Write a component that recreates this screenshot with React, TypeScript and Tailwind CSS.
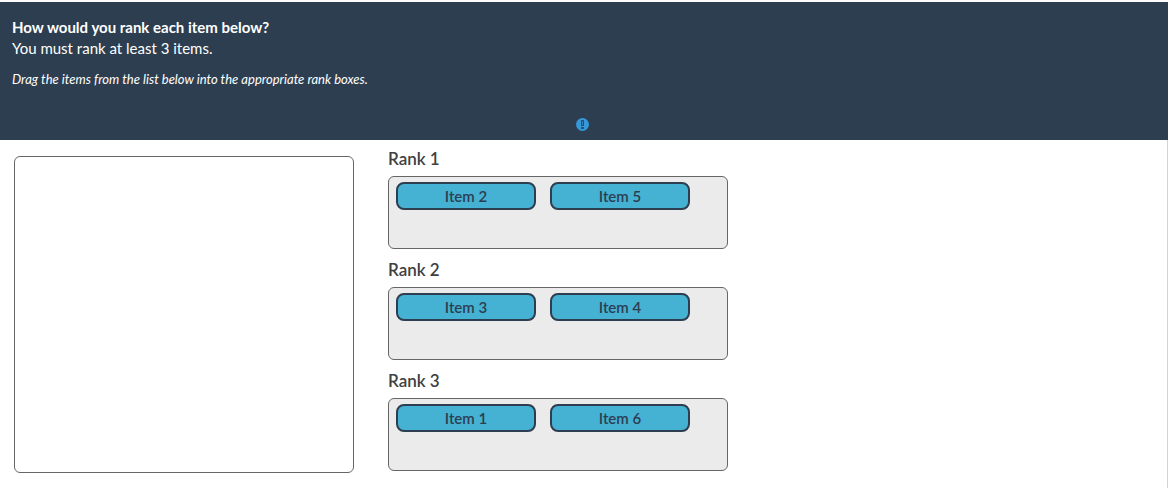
import React, { useState } from "react";

interface Rank {
  id: number;
  title: string;
  items: string[];
}

const initialRanks: Rank[] = [
  { id: 1, title: "Rank 1", items: ["Item 2", "Item 5"] },
  { id: 2, title: "Rank 2", items: ["Item 3", "Item 4"] },
  { id: 3, title: "Rank 3", items: ["Item 1", "Item 6"] },
];

const RankItem: React.FC<{ label: string }> = ({ label }) => (
  <button
    draggable
    onDragStart={(e) => e.dataTransfer.setData("text/plain", label)}
    className="h-7 w-[140px] cursor-move rounded-lg border-2 border-[#2d3e50] bg-[#45b1d3] text-center text-[15px] leading-6 font-semibold text-[#2d3e50]"
  >
    {label}
  </button>
);

const App: React.FC = () => {
  const [ranks, setRanks] = useState(initialRanks);
  const [unranked, setUnranked] = useState<string[]>([]);

  // rankId is null when the item goes back to the list
  const moveItem = (e: React.DragEvent, rankId: number | null) => {
    e.preventDefault();
    const item = e.dataTransfer.getData("text/plain");
    if (!item) return;
    setRanks((prev) =>
      prev.map((rank) => {
        const rest = rank.items.filter((i) => i !== item);
        return { ...rank, items: rank.id === rankId ? [...rest, item] : rest };
      })
    );
    setUnranked((prev) => {
      const rest = prev.filter((i) => i !== item);
      return rankId === null ? [...rest, item] : rest;
    });
  };

  return (
    <div className="mr-[3px] bg-white pt-0.5 font-['Lato',sans-serif] text-[#404041]">
      <header className="bg-[#2d3e50] pt-[15px] pr-[15px] pb-2 pl-3 text-[15px] leading-[21px] text-white">
        <h1 className="font-bold">How would you rank each item below?</h1>
        <p>You must rank at least 3 items.</p>
        <p className="mt-2.5 text-[13px] leading-5 italic">
          Drag the items from the list below into the appropriate rank boxes.
        </p>
        <div className="mt-7 flex h-[15px] items-center justify-center">
          <svg viewBox="0 0 13 13" className="size-[13px]" role="img" aria-label="Required">
            <circle cx="6.5" cy="6.5" r="6.5" fill="#3498db" />
            <path d="M5 2h3v6H5zM5 9h3v2H5z" fill="#2d3e50" fillOpacity="0.8" />
            <path d="M6 3h1v4H6z" fill="#3498db" fillOpacity="0.6" />
          </svg>
        </div>
      </header>

      <main className="flex gap-[34px] border-r border-[#d3d3d3] px-3.5 pb-[15px]">
        <div
          className="mt-4 flex w-[340px] flex-wrap content-start gap-x-3.5 gap-y-2 rounded-md border border-[#666666] bg-white px-[7px] py-[5px]"
          onDragOver={(e) => e.preventDefault()}
          onDrop={(e) => moveItem(e, null)}
        >
          {unranked.map((item) => (
            <RankItem key={item} label={item} />
          ))}
        </div>

        <div className="w-[340px] pt-2">
          {ranks.map((rank) => (
            <section key={rank.id} className="mb-2.5 last:mb-0.5">
              <h2 className="mb-1.5 text-[17px] leading-[22px] font-semibold">{rank.title}</h2>
              <div
                className="flex min-h-[73px] flex-wrap content-start gap-x-3.5 gap-y-2 rounded-md border border-[#666666] bg-[#ebebeb] px-[7px] py-[5px]"
                onDragOver={(e) => e.preventDefault()}
                onDrop={(e) => moveItem(e, rank.id)}
              >
                {rank.items.map((item) => (
                  <RankItem key={item} label={item} />
                ))}
              </div>
            </section>
          ))}
        </div>
      </main>
    </div>
  );
};

export default App;
